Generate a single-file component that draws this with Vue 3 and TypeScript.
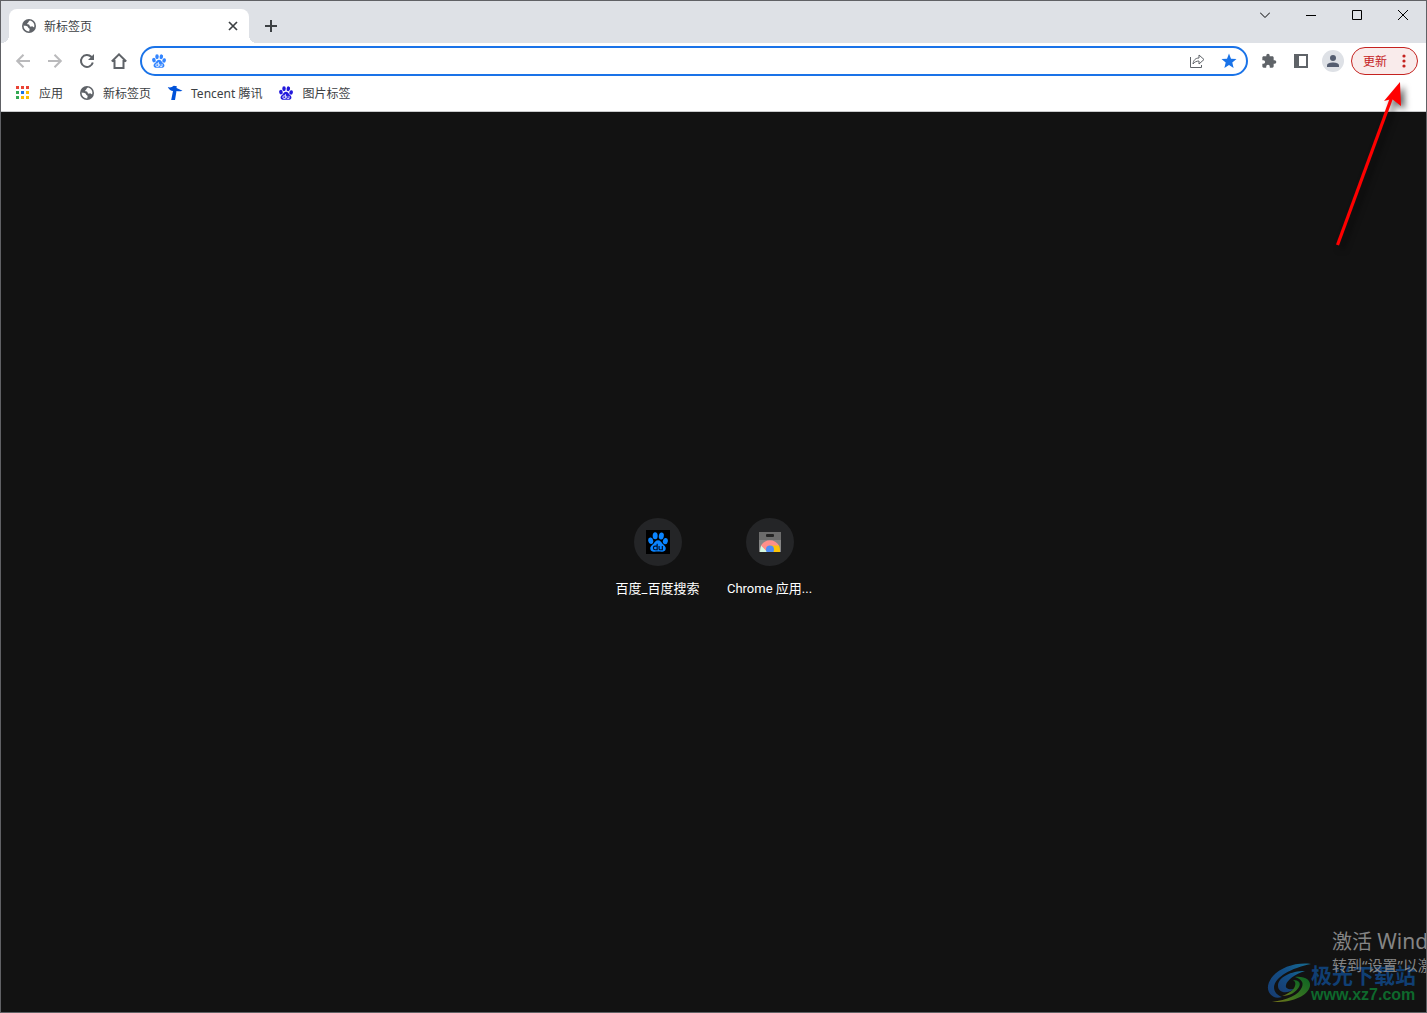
<script setup lang="ts">
interface Bookmark {
  label: string
  icon: 'apps' | 'globe' | 'tencent' | 'paw'
}

interface Shortcut {
  label: string
  icon: 'paw' | 'store'
}

const bookmarks: Bookmark[] = [
  { label: '应用', icon: 'apps' },
  { label: '新标签页', icon: 'globe' },
  { label: 'Tencent 腾讯', icon: 'tencent' },
  { label: '图片标签', icon: 'paw' },
]

const shortcuts: Shortcut[] = [
  { label: '百度_百度搜索', icon: 'paw' },
  { label: 'Chrome 应用...', icon: 'store' },
]

const appColors = ['#ea4335', '#ea4335', '#ea4335', '#34a853', '#1a73e8', '#fbbc04', '#34a853', '#fbbc04', '#fbbc04']
</script>

<template>
  <svg class="defs" aria-hidden="true">
    <symbol id="globe" viewBox="0 0 14 14">
      <circle cx="7" cy="7" r="7" fill="#5f6368" />
      <path fill="#fff" d="M8.200 1.600C7 2 6.800 2.800 6.200 3.500 5.600 4.100 5 4.300 5.200 5c.3.700 1.400.300 2 .8.600.6.300 1.500 1.100 1.800.8.200 1.400-.4 2.200-.2.700.2.900.9 1.700.9A5.400 5.400 0 0 0 8.200 1.600z" />
      <path fill="#fff" d="M1.600 6.600c1.300.3 2.600.2 3.600.7 1 .600.700 1.500 1.600 1.900.8.400 1.100.9.700 1.600-.3.600-.2 1-.2 1.700A5.500 5.500 0 0 1 1.600 6.600z" />
    </symbol>
    <symbol id="paw" viewBox="0 0 24 24">
      <g fill="currentColor">
        <ellipse cx="8.600" cy="4.600" rx="3" ry="4.200" />
        <ellipse cx="16" cy="4.800" rx="3" ry="4.200" transform="rotate(10 16 4.800)" />
        <ellipse cx="3.300" cy="10.500" rx="3" ry="3.900" transform="rotate(-12 3.300 10.500)" />
        <ellipse cx="20.800" cy="11" rx="3" ry="3.800" transform="rotate(12 20.800 11)" />
        <path d="M12 10c2.800 0 4 2.300 5.400 4 1.800 1.800 4.300 3.200 3.900 6.200-.4 2.900-2.700 3.700-4.900 3.500-3-.3-5.800-.3-8.800 0-2.200.2-4.500-.6-4.900-3.500-.4-3 2.100-4.400 3.900-6.200C8 12.300 9.200 10 12 10z" />
      </g>
      <path class="paw-mark" fill="none" stroke-width="1.400" d="M11 14v7.300H8.500q-2 0-2-2.200t2-2.200H11M13.300 16.900v3.200q0 1.200 1.200 1.200h2.700v-4.400" />
    </symbol>
  </svg>

  <div class="window">
    <header class="tabstrip">
      <div class="tab">
        <svg class="globe"><use href="#globe" /></svg>
        <span class="tab-title label">新标签页</span>
        <button class="tab-close" aria-label="关闭">
          <svg width="10" height="10" viewBox="0 0 10 10"><path d="M1 1l8 8M9 1L1 9" stroke="#3c4043" stroke-width="1.700" /></svg>
        </button>
      </div>
      <button class="new-tab" aria-label="新标签页">
        <svg width="12" height="12" viewBox="0 0 12 12"><path d="M6 0v12M0 6h12" stroke="#3c4043" stroke-width="2" /></svg>
      </button>
      <div class="controls">
        <button aria-label="搜索标签页"><svg width="10" height="10" viewBox="0 0 10 10"><path d="M0 2.500l5 5 5-5" /></svg></button>
        <button aria-label="最小化"><svg width="10" height="10" viewBox="0 0 10 10"><path d="M0 5.500h10" /></svg></button>
        <button aria-label="最大化"><svg width="10" height="10" viewBox="0 0 10 10"><path d="M.5.5h9v9h-9z" /></svg></button>
        <button aria-label="关闭窗口"><svg width="10" height="10" viewBox="0 0 10 10"><path d="M0 0l10 10M10 0L0 10" /></svg></button>
      </div>
    </header>

    <nav class="toolbar">
      <div class="group">
        <button class="tool faded" aria-label="后退">
          <svg width="16" height="16" viewBox="0 0 16 16"><path d="M15 8H2.500M8.500 1.700L2.200 8l6.300 6.300" /></svg>
        </button>
        <button class="tool faded" aria-label="前进">
          <svg width="16" height="16" viewBox="0 0 16 16"><path d="M1 8h12.500M7.500 1.700L13.800 8l-6.300 6.300" /></svg>
        </button>
        <button class="tool" aria-label="重新加载">
          <svg width="16" height="16" viewBox="0 0 16 16"><path d="M13.800 9.500A6 6 0 1 1 12.300 3.800L13.800 5.300" /><path class="solid" d="M15 1v6H9z" /></svg>
        </button>
        <button class="tool" aria-label="主页">
          <svg width="16" height="16" viewBox="0 0 16 16"><path d="M2 8h1.500v7h9V8H14M.8 8.500L8 1.400l7.200 7.100" /></svg>
        </button>
      </div>

      <div class="omnibox">
        <svg class="site"><use href="#paw" /></svg>
        <input type="text" aria-label="地址和搜索栏" />
        <button class="tool" aria-label="分享">
          <svg width="16" height="16" viewBox="0 0 16 16"><path class="thin" d="M1.500 4v10.500h11V12M4 11C4.500 7 6.500 5 10 5V2l5 4.500-5 4.500V8C7.500 8 5.500 9 4 11z" /></svg>
        </button>
        <button class="tool" aria-label="书签">
          <svg width="16" height="16" viewBox="0 0 16 16"><path fill="#1a73e8" d="M8 .6l2 5.100 5.500.4-4.200 3.500 1.300 5.300L8 12l-4.600 2.900 1.300-5.300L.5 6.100 6 5.700z" /></svg>
        </button>
      </div>

      <div class="group">
        <button class="tool" aria-label="扩展程序">
          <svg width="16" height="16" viewBox="0 0 24 24"><path class="solid" d="M20.500 11H19V7c0-1.100-.9-2-2-2h-4V3.500a2.500 2.500 0 0 0-5 0V5H4c-1.100 0-2 .9-2 2v3.800h1.500a2.700 2.700 0 0 1 0 5.400H2V20c0 1.100.9 2 2 2h3.800v-1.500a2.700 2.700 0 0 1 5.400 0V22H17c1.100 0 2-.9 2-2v-4h1.500a2.500 2.500 0 0 0 0-5z" /></svg>
        </button>
        <button class="tool" aria-label="侧边栏">
          <svg width="14" height="14" viewBox="0 0 14 14"><path class="solid" fill-rule="evenodd" d="M0 0h14v14H0zM5 2v10h7V2z" /></svg>
        </button>
        <button class="tool" aria-label="个人资料">
          <svg width="22" height="22" viewBox="0 0 22 22"><circle cx="11" cy="11" r="11" fill="#dee1e6" /><g fill="#545d70"><circle cx="11" cy="8" r="3" /><path d="M5 17v-1.500C5 13.300 8.500 12.500 11 12.500s6 .8 6 3V17z" /></g></svg>
        </button>
        <button class="update">
          <span class="label">更新</span>
          <svg width="4" height="14" viewBox="0 0 4 14" fill="#c5221f"><circle cx="2" cy="2" r="1.600" /><circle cx="2" cy="7" r="1.600" /><circle cx="2" cy="12" r="1.600" /></svg>
        </button>
      </div>
    </nav>

    <nav class="bookmarks" aria-label="书签栏">
      <a v-for="b in bookmarks" :key="b.label" href="#">
        <svg v-if="b.icon === 'apps'" width="16" height="16" viewBox="0 0 16 16">
          <rect v-for="(c, i) in appColors" :key="i" :x="1 + (i % 3) * 5" :y="1 + Math.floor(i / 3) * 5" width="3" height="3" :fill="c" />
        </svg>
        <svg v-else-if="b.icon === 'globe'" width="16" height="16" viewBox="0 0 16 16"><use href="#globe" x="1" y="1" width="14" height="14" /></svg>
        <svg v-else-if="b.icon === 'tencent'" width="16" height="16" viewBox="0 0 16 16">
          <path fill="#0052d9" d="M.8 2c2 .8 4 .4 6-1.200l3 .4-.3 1.800 6 2.700c-2 .8-4 .8-6 .4L8 15H4.200L6 6C4 5.900 2 4.600.8 2z" />
        </svg>
        <svg v-else class="violet" width="16" height="16" viewBox="0 0 16 16"><use href="#paw" x="1" y="1" width="14" height="14" /></svg>
        <span class="label">{{ b.label }}</span>
      </a>
    </nav>

    <main class="page">
      <div class="shortcuts">
        <a v-for="s in shortcuts" :key="s.label" href="#" class="shortcut">
          <span class="disc">
            <svg v-if="s.icon === 'paw'" class="sky" width="24" height="24" viewBox="0 0 24 24">
              <rect width="24" height="24" fill="#000" />
              <use href="#paw" x="2" y="2" width="20" height="20" />
            </svg>
            <svg v-else width="24" height="24" viewBox="0 0 24 24">
              <path fill="#858585" d="M1 2h22v20H1z" />
              <path fill="#6c6c6c" d="M1 2h22v8H1z" />
              <rect x="8" y="4" width="8" height="3" rx="1" fill="#242424" />
              <path fill="#d5f8e0" d="M2 22c0-3 .5-5 1.500-7l6 7z" />
              <path fill="#fbc408" d="M12 15h8.700c1 2 1.500 4 1.300 7H12z" />
              <path fill="#ff8f8a" d="M3 15.500a10.400 10.400 0 0 1 18 0h-9l-4 5z" />
              <circle cx="12" cy="19.500" r="4" fill="#4e8df5" />
              <path fill="#242424" d="M0 22h24v2H0z" />
            </svg>
          </span>
          <span class="caption">{{ s.label }}</span>
        </a>
      </div>

      <div class="brand">
        <svg width="44" height="42" viewBox="0 0 44 42">
          <defs>
            <linearGradient id="blue" x1="0" y1="1" x2="1" y2="0"><stop offset="0" stop-color="#173b70" /><stop offset=".6" stop-color="#134f86" /><stop offset="1" stop-color="#176d91" /></linearGradient>
            <linearGradient id="green" x1="0" y1="1" x2="1" y2="0"><stop offset="0" stop-color="#7a7519" /><stop offset=".4" stop-color="#3b7420" /><stop offset="1" stop-color="#0c6424" /></linearGradient>
          </defs>
          <path fill="url(#blue)" d="M44 2C30 0 14 5 6 14c-7 8-7 17 1 21 2 1 5 1 8 0-5-2-8-5-8-10C8 15 24 6 44 2z" />
          <path fill="url(#blue)" d="M38 9C24 9 11 15 11 24c0 6 8 9 16 3-6 1-9-1-8-4 1-5 9-11 19-14z" />
          <path fill="url(#green)" d="M28 15c10-1 16 3 15 9-2 10-18 17-38 16 15-2 27-7 30-15 2-5-1-8-7-10z" />
          <path fill="url(#green)" d="M26 18c6 0 8 3 6 7-3 5-9 9-17 9 6-2 12-6 13-10 1-3 0-5-2-6z" />
        </svg>
        <div class="brand-text">
          <span class="brand-name">极光下载站</span>
          <span class="brand-url">www.xz7.com</span>
        </div>
      </div>

      <aside class="activation">
        <p class="big">激活 <span>Wind</span></p>
        <p class="small">转到“设置”以激</p>
      </aside>
    </main>

    <svg class="pointer" width="90" height="190" viewBox="0 0 90 190" aria-hidden="true">
      <g fill="#f00"><path d="M11 174.500L65 27.500l3 1L14 175.500z" /><path d="M75 12L59 31l8-2 9 7z" /></g>
    </svg>
  </div>
</template>

<style>
body {
  margin: 0;
}
</style>

<style scoped>
.window {
  position: relative;
  box-sizing: border-box;
  min-height: 100vh;
  display: flex;
  flex-direction: column;
  overflow: hidden;
  border: 1px solid #606165;
  background: #fff;
  color: #3c4043;
  font: 12px/16px "Noto Sans", "Noto Sans CJK SC", sans-serif;
}
.defs {
  position: absolute;
  width: 0;
  height: 0;
}
svg {
  display: block;
  flex: none;
}
button {
  display: flex;
  align-items: center;
  justify-content: center;
  padding: 0;
  border: 0;
  background: none;
  color: inherit;
  font: inherit;
}
a {
  color: inherit;
  text-decoration: none;
}
.label {
  padding-top: 2px;
}
.paw-mark {
  stroke: var(--mark, #fff);
}
.tabstrip {
  display: flex;
  height: 42px;
  background: #dee1e6;
}
.tab {
  position: relative;
  box-sizing: border-box;
  display: flex;
  align-items: center;
  width: 240px;
  height: 34px;
  margin: 8px 0 0 8px;
  padding: 0 10px 0 13px;
  border-radius: 8px 8px 0 0;
  background: #fff;
}
.tab::before,
.tab::after {
  content: "";
  position: absolute;
  bottom: 0;
  width: 8px;
  height: 8px;
}
.tab::before {
  right: 100%;
  background: radial-gradient(circle at 0 0, transparent 8px, #fff 8px);
}
.tab::after {
  left: 100%;
  background: radial-gradient(circle at 100% 0, transparent 8px, #fff 8px);
}
.globe {
  width: 14px;
  height: 14px;
}
.tab-title {
  flex: 1;
  margin-left: 8px;
}
.tab-close {
  width: 12px;
  height: 16px;
}
.new-tab {
  width: 28px;
  height: 28px;
  margin: 11px 0 0 8px;
}
.controls {
  display: flex;
  margin-left: auto;
}
.controls button {
  width: 46px;
  height: 28px;
}
.controls path {
  fill: none;
  stroke: #000;
}
.toolbar {
  display: flex;
  align-items: center;
  gap: 7px;
  height: 36px;
  padding: 0 8px;
}
.group {
  display: flex;
  align-items: center;
  gap: 4px;
}
.tool {
  width: 28px;
  height: 28px;
  color: #5f6368;
}
.tool path:not([fill]) {
  fill: none;
  stroke: currentColor;
  stroke-width: 2;
}
.tool path.solid {
  fill: currentColor;
  stroke: none;
}
.tool path.thin {
  stroke-width: 1;
}
.tool g path:not([fill]) {
  fill: inherit;
  stroke: none;
}
.tool.faded {
  color: #bababc;
}
.omnibox {
  flex: 1;
  box-sizing: border-box;
  display: flex;
  align-items: center;
  gap: 4px;
  height: 30px;
  padding: 0 3px 0 10px;
  border: 2px solid #1a73e8;
  border-radius: 15px;
  color: #1a73e8;
}
.omnibox input {
  flex: 1;
  min-width: 0;
  padding: 0;
  border: 0;
  outline: 0;
  background: none;
  font: inherit;
}
.site {
  width: 14px;
  height: 14px;
  color: #3385ff;
}
.update {
  box-sizing: border-box;
  justify-content: space-between;
  width: 67px;
  height: 28px;
  padding: 0 11px;
  border: 1px solid #c5221f;
  border-radius: 14px;
  background: #f9ebeb;
  color: #c5221f;
}
.bookmarks {
  display: flex;
  align-items: center;
  gap: 16px;
  box-sizing: border-box;
  height: 32px;
  padding: 0 14px 4px;
}
.bookmarks a {
  display: flex;
  align-items: center;
  gap: 8px;
}
.violet {
  color: #2319dc;
}
.page {
  position: relative;
  flex: 1;
  display: flex;
  align-items: center;
  justify-content: center;
  border-top: 1px solid #c9cacc;
  background: #121212;
  overflow: hidden;
}
.shortcuts {
  display: flex;
  padding-bottom: 8px;
}
.shortcut {
  box-sizing: border-box;
  width: 112px;
  height: 112px;
  padding-top: 16px;
  display: flex;
  flex-direction: column;
  align-items: center;
  gap: 14px;
  color: #fff;
  font: 400 13px/18px Roboto, "Noto Sans CJK SC", sans-serif;
}
.disc {
  display: flex;
  align-items: center;
  justify-content: center;
  width: 48px;
  height: 48px;
  border-radius: 50%;
  background: #242527;
}
.sky {
  color: #0a84ff;
  --mark: #00102a;
}
.caption {
  white-space: nowrap;
}
.activation {
  position: absolute;
  top: calc(100% - 84px);
  left: calc(100% - 94px);
  color: #858585;
  white-space: nowrap;
}
.activation p {
  margin: 0;
}
.big {
  font-size: 20px;
  line-height: 26px;
}
.big span {
  font-size: 21px;
}
.small {
  font-size: 15px;
  line-height: 20px;
}
.brand {
  position: absolute;
  right: 10px;
  bottom: 8px;
  display: flex;
  align-items: center;
}
.brand-text {
  display: flex;
  flex-direction: column;
}
.brand-name {
  color: #103f74;
  font: 700 21px/24px "Noto Sans CJK SC", sans-serif;
}
.brand-url {
  color: #0e682c;
  font: 700 16px/18px "Liberation Sans", sans-serif;
}
.pointer {
  position: absolute;
  top: 69px;
  right: 11px;
  filter: drop-shadow(4px 4px 3px rgba(0, 0, 0, 0.6));
  pointer-events: none;
}
</style>
